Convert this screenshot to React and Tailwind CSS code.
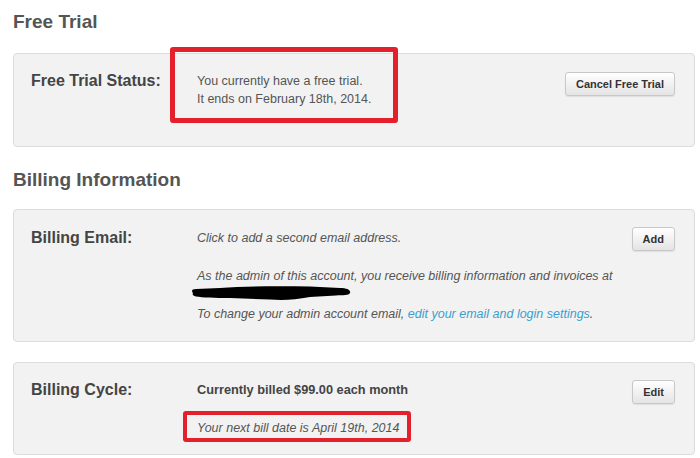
export default function App() {
  const btn =
    'h-[24px] px-[10px] rounded-[3px] border border-[#c8c8c8] bg-gradient-to-b from-[#ffffff] to-[#e4e4e4] text-[11px] font-bold text-[#333] shadow-[0_1px_1px_rgba(0,0,0,0.08)] leading-none';

  return (
    <div className="w-[700px] h-[458px] overflow-hidden bg-white pl-[13px] pr-[5px] font-['Liberation_Sans',Arial,sans-serif] text-[#555]">
      <h2 className="mt-[10px] mb-[19px] text-[19px] leading-[24px] font-bold text-[#555]">Free Trial</h2>

      {/* free trial panel */}
      <div className="relative flex items-start rounded-[4px] border border-[#dcdcdc] bg-[#f2f2f2] pl-[17px] pr-[19px] pt-[17px] pb-[38px]">
        <div className="w-[166px] shrink-0 text-[16px] leading-[20px] font-bold text-[#444]">Free Trial Status:</div>
        <div className="flex-1 pt-[1px] text-[12.5px] leading-[18px] text-[#555]">
          <p>You currently have a free trial.</p>
          <p>It ends on February 18th, 2014.</p>
        </div>
        <button className={`${btn} mt-[1px]`}>Cancel Free Trial</button>
        <div className="absolute left-[156px] top-[-7px] w-[228px] h-[76px] rounded-[3px] border-[5px] border-[#e3202b]" />
      </div>

      <h2 className="mt-[21px] mb-[17px] text-[19px] leading-[24px] font-bold text-[#555]">Billing Information</h2>

      {/* billing email panel */}
      <div className="flex items-start rounded-[4px] border border-[#dcdcdc] bg-[#f2f2f2] pl-[17px] pr-[19px] pt-[18px] pb-[18px]">
        <div className="w-[166px] shrink-0 text-[16px] leading-[20px] font-bold text-[#444]">Billing Email:</div>
        <div className="flex-1 pt-[1px] text-[12.5px] leading-[18px] italic text-[#555]">
          <p>Click to add a second email address.</p>
          <p className="mt-[20px]">As the admin of this account, you receive billing information and invoices at</p>
          <svg width="162" height="18" viewBox="0 0 162 18" className="block -ml-[7px] mt-[-1px]">
            <path
              d="M3 9 C1 7 2 5 6 5 L30 4 C55 2 90 2 120 2.5 L150 4 C157 4 161 6 160 9 C159 11.5 153 11 146 11.5 L120 13 C105 15.5 95 16.5 80 15.5 L40 14 C25 14 12 13.5 6 12.5 C3 12 2 10.5 3 9 Z"
              fill="#000"
            />
          </svg>
          <p className="mt-[3px]">
            To change your admin account email,{' '}
            <span className="text-[#3a9fcf]">edit your email and login settings</span>.
          </p>
        </div>
        <button className={`${btn} -mt-[1px]`}>Add</button>
      </div>

      {/* billing cycle panel */}
      <div className="relative mt-[20px] flex items-start rounded-[4px] border border-[#dcdcdc] bg-[#f2f2f2] pl-[17px] pr-[19px] pt-[17px] pb-[17px]">
        <div className="w-[166px] shrink-0 text-[16px] leading-[20px] font-bold text-[#444]">Billing Cycle:</div>
        <div className="flex-1 pt-[1px] text-[12.5px] leading-[18px] text-[#555]">
          <p className="font-bold text-[12.75px] text-[#444]">Currently billed $99.00 each month</p>
          <p className="mt-[20px] italic">Your next bill date is April 19th, 2014</p>
        </div>
        <button className={btn}>Edit</button>
        <div className="absolute left-[169px] top-[48px] w-[228px] h-[31px] rounded-[3px] border-[4px] border-[#e3202b]" />
      </div>
    </div>
  );
}
